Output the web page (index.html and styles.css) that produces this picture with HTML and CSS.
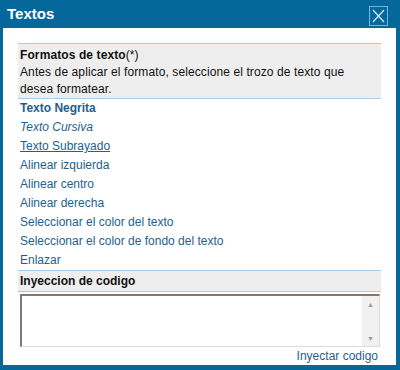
FILE: index.html
```html
<!DOCTYPE html>
<html lang="es">

<head>
    <meta charset="UTF-8">
    <title>Textos</title>
    <link rel="stylesheet" href="styles.css">
</head>

<body>
    <div class="dialog">
        <div class="title-bar">
            <label>Textos</label>
            <div class="close-button">
                <svg width="13" height="14" viewBox="0 0 13 14">
                    <path d="M1 1 L12 13 M12 1 L1 13" stroke="#cfe8f8" stroke-width="1.3" fill="none" />
                </svg>
            </div>
        </div>

        <div class="content">
            <div class="section-head intro">
                <b>Formatos de texto</b>(*)<br>
                Antes de aplicar el formato, seleccione el trozo de texto que desea formatear.
            </div>

            <div class="format-list">
                <a class="bold">Texto Negrita</a>
                <a class="italic">Texto Cursiva</a>
                <a class="underline">Texto Subrayado</a>
                <a>Alinear izquierda</a>
                <a>Alinear centro</a>
                <a>Alinear derecha</a>
                <a>Seleccionar el color del texto</a>
                <a>Seleccionar el color de fondo del texto</a>
                <a>Enlazar</a>
            </div>

            <div class="section-head code-head">
                <b>Inyeccion de codigo</b>
            </div>

            <div class="code-box">
                <textarea></textarea>
                <div class="scrollbar">
                    <span>&#9650;</span>
                    <span>&#9660;</span>
                </div>
            </div>

            <div class="inject">
                <a>Inyectar codigo</a>
            </div>
        </div>
    </div>
</body>

</html>
```

FILE: styles.css
```css
body {
    margin: 0;
    background-color: #05679a;
    font-family: 'Liberation Sans', Arial, sans-serif;
    font-size: 12px;
}

.dialog {
    width: 400px;
    height: 370px;
    display: flex;
    flex-direction: column;
}

.title-bar {
    height: 29px;
    display: flex;
    align-items: center;
    justify-content: space-between;
    padding: 0 12px 0 7px;
}

.title-bar label {
    color: #fff;
    font-size: 15px;
    font-weight: bold;
    margin-top: -1px;
}

.close-button {
    width: 17px;
    height: 18px;
    border: 1px solid #6cb9e9;
    display: flex;
    justify-content: center;
    align-items: center;
    margin-top: 3px;
}

.content {
    flex: 1;
    background-color: #fff;
    margin: 0 4px 5px 3px;
    padding: 15px 15px 0 15px;
    display: flex;
    flex-direction: column;
}

.section-head {
    background-color: #eeeeee;
    border-top: 1px solid #a9cbe6;
    border-bottom: 1px solid #a9cbe6;
    padding: 0 2px;
    color: #111;
}

.intro {
    line-height: 17px;
    padding: 3px 34px 0 2px;
    letter-spacing: 0.1px;
}

.format-list {
    display: flex;
    flex-direction: column;
    padding-left: 2px;
}

.format-list a {
    line-height: 19px;
    color: #1d5f8e;
    cursor: pointer;
}

.format-list .bold {
    font-weight: bold;
}

.format-list .italic {
    font-style: italic;
}

.format-list .underline {
    text-decoration: underline;
}

.code-head {
    line-height: 20px;
}

.code-box {
    margin: 2px 1px 0 2px;
    height: 53px;
    display: flex;
    border-top: 2px solid #7a7a7a;
    border-left: 2px solid #7a7a7a;
    border-right: 1px solid #dcdcdc;
    border-bottom: 1px solid #dcdcdc;
    box-sizing: border-box;
}

.code-box textarea {
    flex: 1;
    border: none;
    resize: none;
    outline: none;
    padding: 2px;
}

.scrollbar {
    width: 17px;
    background-color: #f1f1f1;
    display: flex;
    flex-direction: column;
    justify-content: space-between;
    align-items: center;
    font-size: 7px;
    color: #9a9a9a;
    padding: 5px 0 4px;
}

.inject {
    text-align: right;
    line-height: 18px;
    padding-right: 3px;
}

.inject a {
    color: #1d5f8e;
    cursor: pointer;
}
```
